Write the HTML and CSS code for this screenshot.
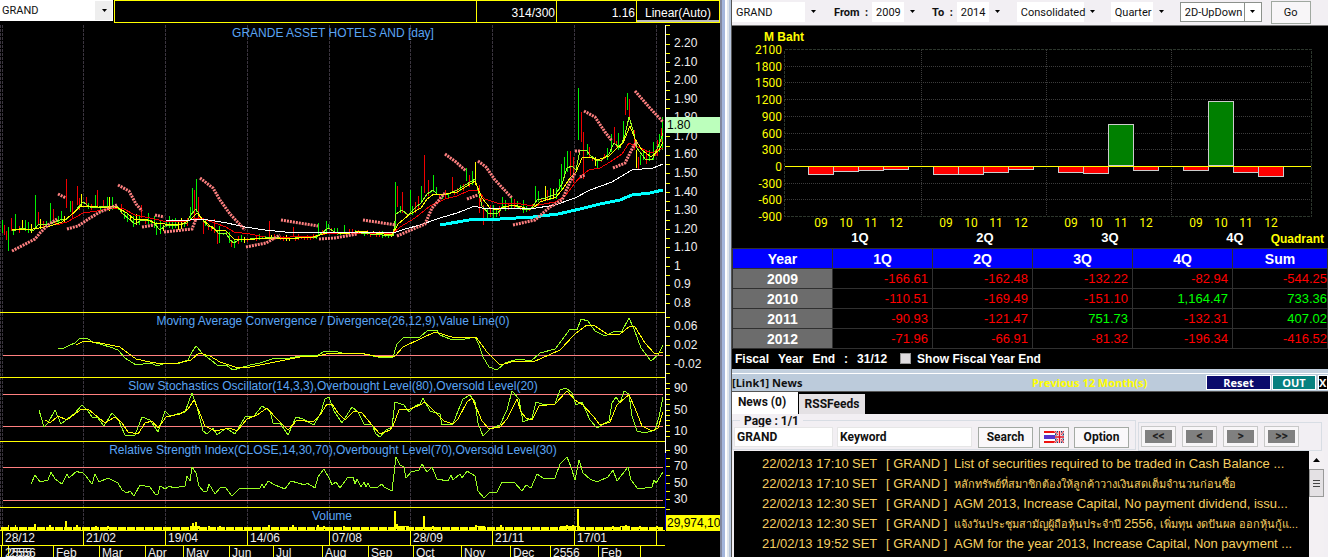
FILE: index.html
```html
<!DOCTYPE html>
<html lang="en">
<head>
<meta charset="utf-8">
<title>GRAND - Technical chart and news</title>
<link rel="stylesheet" href="styles.css">
</head>
<body>
<main class="desk">
  <section class="tech">
    <header class="tech-head">
      <label class="combo combo-symbol"><select aria-label="Symbol"><option>GRAND</option></select><svg class="arrow" viewBox="0 0 7 4"><path d="M1 0h5L3.500 3z"/></svg></label>
      <div class="cells">
        <span class="cell cell-wide"></span>
        <span class="cell">314/300</span>
        <span class="cell">1.16</span>
        <button class="cell cell-btn" type="button">Linear(Auto)</button>
      </div>
    </header>
    <svg class="tech-chart" id="tech" viewBox="0 24 720 533" role="img" aria-label="Price chart">
      <g id="grid"></g>
      <g id="candles"></g>
      <g id="lines"></g>
      <g id="frame"></g>
      <g id="labels"></g>
    </svg>
  </section>

  <div class="splitter"></div>

  <section class="side">
    <section class="fin">
      <form class="bar">
        <label class="combo w-sym"><select aria-label="Company"><option>GRAND</option></select><svg class="arrow" viewBox="0 0 7 4"><path d="M1 0h5L3.500 3z"/></svg></label>
        <label class="lead" for="from">From&nbsp; :</label>
        <span class="combo w-year"><select id="from"><option>2009</option></select><svg class="arrow" viewBox="0 0 7 4"><path d="M1 0h5L3.500 3z"/></svg></span>
        <label class="lead" for="to">To&nbsp; :</label>
        <span class="combo w-year"><select id="to"><option>2014</option></select><svg class="arrow" viewBox="0 0 7 4"><path d="M1 0h5L3.500 3z"/></svg></span>
        <label class="combo w-cons"><select aria-label="Statement"><option>Consolidated</option></select><svg class="arrow" viewBox="0 0 7 4"><path d="M1 0h5L3.500 3z"/></svg></label>
        <label class="combo w-qtr"><select aria-label="Period"><option>Quarter</option></select><svg class="arrow" viewBox="0 0 7 4"><path d="M1 0h5L3.500 3z"/></svg></label>
        <label class="combo w-type boxed"><select aria-label="Chart type"><option>2D-UpDown</option></select><svg class="arrow" viewBox="0 0 7 4"><path d="M1 0h5L3.500 3z"/></svg></label>
        <button class="go" type="button">Go</button>
      </form>
      <svg class="fin-chart" id="fin" viewBox="732 26 596 222" role="img" aria-label="Quarterly profit, million baht"></svg>
      <table class="fin-table">
        <colgroup><col class="c-q"><col class="c-q"><col class="c-q"><col class="c-q"><col class="c-q"><col></colgroup>
        <thead><tr><th>Year</th><th>1Q</th><th>2Q</th><th>3Q</th><th>4Q</th><th>Sum</th></tr></thead>
        <tbody>
          <tr><th>2009</th><td>-166.61</td><td>-162.48</td><td>-132.22</td><td>-82.94</td><td>-544.25</td></tr>
          <tr><th>2010</th><td>-110.51</td><td>-169.49</td><td>-151.10</td><td class="up">1,164.47</td><td class="up">733.36</td></tr>
          <tr><th>2011</th><td>-90.93</td><td>-121.47</td><td class="up">751.73</td><td>-132.31</td><td class="up">407.02</td></tr>
          <tr><th>2012</th><td>-71.96</td><td>-66.91</td><td>-81.32</td><td>-196.34</td><td>-416.52</td></tr>
        </tbody>
      </table>
      <div class="fiscal">
        <p><span>Fiscal</span><span>Year</span><span>End</span><span>:</span><span>31/12</span></p>
        <label><input type="checkbox">Show Fiscal Year End</label>
      </div>
    </section>

    <section class="news">
      <header class="news-title">
        <h2>[Link1] News</h2>
        <span class="period">Previous 12 Month(s)</span>
        <button class="t-btn reset" type="button">Reset</button>
        <button class="t-btn out" type="button">OUT</button>
        <button class="t-btn close" type="button">X</button>
      </header>
      <nav class="tabs">
        <button class="tab tab-on" type="button">News (0)</button>
        <button class="tab" type="button">RSSFeeds</button>
      </nav>
      <form class="search">
        <fieldset class="filter">
          <legend>Page : 1/1</legend>
          <input class="f-sym" aria-label="Symbol" value="GRAND">
          <input class="f-key" aria-label="Keyword" value="Keyword">
          <button class="s-btn s-search" type="button">Search</button>
          <button class="s-btn s-flag" type="button" aria-label="Language">
            <svg viewBox="0 0 20 12" class="flag"><path fill="#fff" d="M0 0h20v12H0z"/><path fill="#e11" d="M0 0h11v2H0zM0 10h11v2H0z"/><path fill="#53c" d="M0 4h11v4H0z"/><path fill="#22406e" d="M11 0h9v12h-9z"/><path stroke="#fff" stroke-width="2" d="M11 0l9 12M20 0l-9 12"/><path stroke="#d12" stroke-width="1" d="M11 0l9 12M20 0l-9 12"/><path stroke="#fff" stroke-width="3" d="M15.500 0v12M11 6h9"/><path stroke="#d12" stroke-width="1.500" d="M15.500 0v12M11 6h9"/></svg>
          </button>
          <button class="s-btn s-opt" type="button">Option</button>
        </fieldset>
        <div class="pager">
          <button type="button"><span>&lt;&lt;</span></button>
          <button type="button"><span>&lt;</span></button>
          <button type="button"><span>&gt;</span></button>
          <button type="button"><span>&gt;&gt;</span></button>
        </div>
      </form>
      <div class="list">
        <ul>
          <li><time>22/02/13 17:10</time><span>SET</span><span>[ GRAND ]</span><a href="#">List of securities required to be traded in Cash Balance ...</a></li>
          <li><time>22/02/13 17:10</time><span>SET</span><span>[ GRAND ]</span><a href="#" class="thai" lang="th">หลักทรัพย์ที่สมาชิกต้องให้ลูกค้าวางเงินสดเต็มจำนวนก่อนซื้อ</a></li>
          <li><time>22/02/13 12:30</time><span>SET</span><span>[ GRAND ]</span><a href="#">AGM 2013, Increase Capital, No payment dividend, issu...</a></li>
          <li><time>22/02/13 12:30</time><span>SET</span><span>[ GRAND ]</span><a href="#" class="thai" lang="th">แจ้งวันประชุมสามัญผู้ถือหุ้นประจำปี <span class="num">2556,</span> เพิ่มทุน งดปันผล ออกหุ้นกู้แ...</a></li>
          <li><time>21/02/13 19:52</time><span>SET</span><span>[ GRAND ]</span><a href="#">AGM for the year 2013, Increase Capital, Non pavyment ...</a></li>
        </ul>
        <div class="scroll">
          <svg class="scroll-up" viewBox="0 0 7 4"><path d="M0 4h7L3.500 0z"/></svg>
          <div class="thumb"><i></i><i></i><i></i></div>
        </div>
      </div>
    </section>
  </section>
</main>
<script src="chart.js"></script>
</body>
</html>
```
FILE: styles.css
```css
* { box-sizing: border-box; }
html, body { margin: 0; height: 100%; }
body {
  background: #000;
  color: #fff;
  font: 12px "Liberation Sans", Arial, sans-serif;
  overflow: hidden;
}
button, input, select { font: inherit; color: inherit; margin: 0; border-radius: 0; }
.desk { display: grid; grid-template-columns: 720fr 12px 596fr; height: 100vh; }
.tech, .side { min-width: 0; overflow: hidden; }

/* combo boxes */
.combo { display: grid; align-items: center; background: #fff; color: #111; height: 20px; }
.combo > * { grid-area: 1 / 1; }
.combo select {
  appearance: none; border: 0; background: none; width: 100%; height: 100%;
  padding: 0 0 0 4px; font: 11px Roboto, "Liberation Sans", sans-serif;
}
.arrow { justify-self: end; width: 7px; height: 4px; margin-right: 5px; fill: #000; pointer-events: none; }

/* technical chart */
.tech-head { display: flex; height: 24px; }
.combo-symbol { width: 113px; height: 21px; margin-right: 1px; padding-right: 0; }
.combo-symbol select { padding-left: 2px; background: linear-gradient(#eee, #eee) right 1px center / 17px 19px no-repeat; }
.cells { flex: 1; display: flex; height: 23px; border: 1px solid #ff0; }
.cell { width: 80px; border: 0; border-left: 1px solid #ff0; text-align: right; line-height: 24px; padding-right: 1px; }
.cell-wide { flex: 1; border-left: 0; }
.cell-btn { background: #000; text-align: center; padding: 0; width: 83px; box-shadow: inset 0 -2px #bbb; }
.tech-chart, .fin-chart { display: block; width: 100%; height: auto; }
.tech-chart { font-size: 12px; }
.t-title { fill: #5aa5f5; text-anchor: middle; }
.t-axis { fill: #eee; }
.t-tag { fill: #000; }

.splitter { background: #b7c6dd; border-left: 2px solid #8288a0; border-right: 1px solid #555; box-shadow: inset 3px 0 #a4b6dc, inset 5px 0 #fff, inset 7px 0 #e0e6ec; }

/* financials */
.side { display: flex; flex-direction: column; background: #c3d0de; }
.fin { background: #000; }
.bar { display: flex; align-items: center; height: 26px; background: #f2eff3; border-bottom: 1px solid #777; color: #111; padding-bottom: 1px; }
.lead { font: bold 11px Roboto, sans-serif; }
.w-sym { width: 90px; margin-right: 12px; }
.w-year { width: 49px; margin: 0 11px 0 4px; }
.w-cons { width: 84px; margin-right: 10px; }
.w-qtr { width: 59px; margin-right: 10px; }
.w-type { width: 82px; margin-right: 9px; }
.bar .combo select { background: linear-gradient(#f2eff3, #f2eff3) right center / 17px 100% no-repeat; }
.boxed { border: 1px solid #8c918c; }
.bar .boxed select { background: linear-gradient(#8c918c, #8c918c) right 16px center / 1px 100% no-repeat; }
.go { width: 40px; height: 23px; border: 1px solid #a0a8a0; background: #f8f6f8; padding: 0; font: 11px Roboto, sans-serif; }
.f-y { fill: #ff0; text-anchor: end; }
.f-x { fill: #ff0; text-anchor: middle; }
.f-x, .f-y { font-family: Roboto, sans-serif; }
.f-q { fill: #fff; text-anchor: middle; font-weight: bold; }
.f-b { fill: #ff0; font-weight: bold; }
.f-end { text-anchor: end; }

.fin-table { width: 100%; border-collapse: collapse; table-layout: fixed; font-size: 13px; }
.c-q { width: 100px; }
.fin-table th, .fin-table td { height: 20px; padding: 0 4px 0 0; border: 1px solid #303030; line-height: 16px; }
.fin-table tr > :last-child { padding-right: 0; }
.fin-table th { font-size: 14px; text-align: center; background: #6c6c6c; padding: 0; }
.fin-table thead th { background: #00f; }
.fin-table td { text-align: right; color: #f00; }
.fin-table td.up { color: #0f0; }
.fiscal { display: flex; gap: 13px; align-items: center; height: 20px; padding: 0 0 1px 3px; font-weight: bold; }
.fiscal p { display: flex; gap: 9px; margin: 0; }
.fiscal label { display: flex; align-items: center; gap: 6px; }
.fiscal input { appearance: none; width: 11px; height: 11px; background: #e0dde0; border: 1px solid #999; }

/* news */
.news { flex: 1; min-height: 0; display: flex; flex-direction: column; margin-top: 4px; border-top: 1px solid #fff; }
.news-title { display: flex; align-items: center; height: 17px; color: #111; background: #bccbdb; font: bold 11px "Open Sans", sans-serif; }
.news-title h2 { margin: 0; font: inherit; width: 300px; }
.period { color: #ff0; flex: 1; }
.t-btn { height: 15px; border: 1px solid #fff; padding: 0; line-height: 13px; color: #fff; flex: none; }
.reset { width: 65px; background: #0b0b6c; margin-right: 1px; }
.out { width: 44px; background: #088080; margin-right: 2px; }
.close { width: 10px; background: #000; text-align: left; overflow: hidden; }
.tabs { display: flex; align-items: flex-end; height: 23px; background: #000; border-top: 1px solid #555; }
.tab { border: 0; padding: 0; height: 20px; width: 66px; background: #e4e1e4; color: #111; font: bold 12px Roboto, sans-serif; }
.tab-on { height: 22px; background: #fff; margin-right: 1px; padding: 0 6px 2px 0; }
.search { display: flex; height: 37px; background: #f2eff3; color: #111; font: bold 12px Roboto, sans-serif; padding-right: 6px; }
.filter { display: flex; align-items: center; border: 1px solid #d8dde4; margin: 0; padding: 0 6px 2px 1px; height: 36px; width: 404px; flex: none; }
.filter legend { margin-left: 6px; padding: 0 4px; line-height: 15px; height: 13px; }
.filter input { height: 20px; border: 1px solid #e6e6e6; background: #fff; padding: 0 2px; }
.f-sym { width: 99px; margin-right: 4px; }
.f-key { width: 135px; margin-right: 6px; }
.s-btn { height: 21px; border: 1px solid #a4aaa4; background: #faf8fa; padding: 0; flex: none; }
.s-search { width: 55px; margin-right: 6px; }
.s-flag { width: 30px; margin-right: 5px; display: grid; place-items: center; }
.s-opt { width: 55px; }
.flag { width: 20px; height: 12px; }
.pager { flex: 1; display: flex; gap: 6px; align-items: center; border: 1px solid #d8dde4; margin: 8px 0 0 2px; padding: 0 2px; }
.pager button { width: 35px; height: 21px; padding: 3px; border: 1px solid #c8c8c8; background: #f8f6f8; display: grid; }
.pager span { background: #808080; color: #222; font: bold 12px/13px Roboto, sans-serif; }
.list { flex: 1; min-height: 0; display: flex; overflow: hidden; background: #000; border: solid #f2eff3; border-width: 0 4px 0 2px; }
.list ul { flex: 1; min-width: 0; list-style: none; margin: 0; padding: 3px 0 0 28px; color: #f5cf62; font-size: 13px; overflow: hidden; }
.list li { display: grid; grid-template-columns: 90px 34px 68px 1fr; height: 20px; line-height: 20px; white-space: nowrap; }
.list a { color: inherit; text-decoration: none; }
.list .thai { font-size: 11px; }
.list .num { font-size: 13px; }
.scroll { width: 15px; background: #f3f0f3; display: flex; flex-direction: column; align-items: center; padding-top: 7px; }
.scroll-up { width: 7px; height: 4px; margin-bottom: 7px; flex: none; }
.thumb { width: 15px; height: 28px; border: 1px solid #999; background: #e4e1e4; display: grid; align-content: center; justify-content: center; gap: 2px; }
.thumb i { width: 7px; height: 1px; background: #444; }
```
FILE: chart.js
```js
const NS = 'http://www.w3.org/2000/svg';
function add(parent, tag, attrs, text) {
  const el = document.createElementNS(NS, tag);
  for (const k in attrs) el.setAttribute(k, attrs[k]);
  if (text !== undefined) el.textContent = text;
  parent.appendChild(el);
  return el;
}
const byId = id => document.getElementById(id);
const G = '#00f000', R = '#f00000', Y = '#ffff00', LIME = '#9f2', PINK = '#ff8080';

/* ---- technical chart ---- */
const series = {
  fast: '12,231 23,228 33,231 38,225 50,224 60,220 67,219 75,211 83,202 90,207 96,208 103,206 112,206 118,207 122,213 129,219 135,224 142,220 152,221 160,230 166,225 178,225 187,223 190,216 196,209 202,219 208,226 213,227 219,234 226,233 230,240 234,243 240,239 250,239 265,238 272,237 280,238 290,239 300,237 315,238 322,233 328,228 335,232 345,233 352,232 370,234 393,236 396,214 402,210 408,215 416,207 421,203 427,194 433,190 438,195 448,194 457,190 467,184 475,179 478,190 482,206 488,213 497,214 502,208 513,205 525,210 531,209 537,200 545,198 556,194 562,184 567,168 572,166 576,170 580,150 586,150 590,155 597,161 602,160 609,154 614,143 620,148 625,135 629,117 633,130 637,148 645,159 652,160 660,142 663,133',
  mid: '12,230 33,229 50,226 62,222 70,216 80,207 90,206 105,208 112,206 118,208 127,213 135,220 145,219 155,223 165,224 180,225 190,220 197,213 203,220 215,230 226,231 234,239 245,240 265,238 285,239 313,237 330,232 345,234 360,231 392,235 398,224 410,214 421,208 427,199 434,194 440,195 457,192 467,186 475,181 482,198 490,208 497,210 503,207 515,205 525,208 532,209 540,202 556,197 562,190 570,178 576,172 582,158 590,157 597,160 609,156 617,148 623,143 630,126 635,139 642,150 651,157 659,150 663,142',
  slow: '56,225 67,222 83,213 97,211 110,209 122,208 135,215 150,218 163,221 185,222 196,218 203,219 215,223 226,227 234,232 250,234 265,237 290,237 315,236 330,233 350,233 392,234 400,227 415,218 430,206 445,199 457,196 470,190 477,190 485,199 500,204 515,203 533,206 555,202 565,196 575,183 582,175 589,170 600,168 610,162 622,154 629,143 640,148 652,153 663,148',
  white: '166,220 190,220 200,219 215,221 227,223 245,227 265,230 285,232 310,232 358,232 393,233 405,229 420,225 440,218 457,213 475,206 485,209 515,208 530,209 555,205 575,198 590,190 612,182 632,170 653,168 663,164',
  cyan: '440,225 475,219 500,219 533,217 558,214 580,209 600,204 620,200 632,195 650,193 663,190',
  macd: '58,348 62,349 70,345 75,343 80,338 88,339 93,342 103,345 110,347 118,350 125,358 136,365 150,363 158,366 165,363 180,363 188,360 192,352 196,346 203,354 211,360 217,365 226,365 233,370 240,368 250,365 260,363 275,358 290,358 300,356 318,355 325,351 335,351 345,354 360,353 378,357 393,357 397,344 403,338 420,337 427,331 437,330 440,335 450,339 465,339 475,337 479,345 483,357 489,367 497,370 505,363 518,359 531,361 540,353 555,349 562,340 570,329 577,330 581,319 588,321 595,331 605,336 613,332 622,331 629,318 634,329 641,348 651,361 658,355 663,345',
  signal: '76,345 84,341 100,343 120,347 136,359 150,362 162,364 178,363 191,360 199,353 210,356 220,362 235,367 250,367 270,363 300,357 318,356 330,353 360,353 375,356 395,356 403,347 420,339 435,332 445,335 455,338 476,337 487,352 500,365 515,361 533,362 560,350 575,334 587,325 595,326 607,334 620,334 630,326 635,327 645,343 655,354 663,352',
  k: '39,410 44,427 48,423 55,410 61,424 75,413 82,405 88,411 92,417 98,418 104,426 112,413 118,419 125,435 135,435 142,417 150,420 158,432 165,411 170,416 185,412 192,393 197,407 203,431 207,434 213,428 217,435 226,428 235,434 245,417 254,416 262,406 270,411 273,423 280,423 288,435 296,417 303,419 314,425 321,412 325,399 329,397 334,411 342,423 352,407 358,412 364,424 372,425 376,434 380,437 386,430 392,427 395,402 404,405 409,412 415,406 420,404 423,398 430,411 440,414 442,425 453,424 458,411 463,399 470,395 475,402 478,423 483,436 490,429 500,425 507,410 512,391 519,399 523,422 532,418 536,402 545,405 555,404 560,390 566,388 572,393 576,405 582,402 590,420 597,428 605,423 609,421 612,403 616,397 620,403 624,391 629,394 632,416 637,431 645,433 655,430 659,417 663,397',
  d: '45,420 50,423 58,416 67,420 80,410 88,409 105,423 115,417 122,423 128,432 138,434 145,423 152,421 158,428 166,417 180,414 188,409 194,400 198,409 205,426 215,431 230,428 237,431 247,419 257,415 267,408 275,417 288,430 297,420 313,422 320,415 327,404 332,404 338,413 345,420 354,411 362,413 372,425 380,434 390,430 393,426 399,410 410,409 420,405 425,402 433,410 444,421 453,424 458,419 467,402 472,398 477,409 482,421 489,429 500,427 507,419 517,399 521,412 526,418 532,420 539,406 555,404 567,391 575,400 583,405 593,416 600,425 610,422 617,405 625,398 629,395 635,408 642,426 652,431 658,428 663,412',
  rsi: '31,484 35,475 40,482 48,480 51,472 55,479 62,484 67,474 69,478 77,471 80,473 82,472 85,475 92,484 95,474 99,482 108,478 118,483 122,490 127,493 130,491 134,496 140,485 150,487 156,495 158,494 160,486 162,487 165,489 170,486 173,488 185,486 187,476 190,481 192,467 196,473 199,486 204,492 207,491 209,484 215,494 221,487 225,487 232,496 240,488 260,488 262,484 264,488 268,481 275,485 285,489 291,481 305,485 307,483 315,488 318,477 324,469 330,480 332,485 336,482 340,488 348,477 353,477 355,484 357,479 361,487 364,482 366,487 368,483 370,487 378,487 382,484 384,487 392,491 396,457 400,465 404,467 406,478 411,472 419,470 422,464 427,472 432,467 437,479 448,481 451,475 453,480 460,474 462,478 467,471 475,476 478,491 484,498 490,492 497,492 502,482 514,482 522,491 526,485 531,488 537,474 543,478 555,478 560,464 567,457 571,467 575,480 579,460 583,473 590,479 597,482 608,477 613,470 617,481 628,467 631,480 638,489 652,487 654,480 656,483 663,472'
};
const sar = ['12,251 35,239 40,233 48,225 57,219', '58,194 66,198', '67,229 78,226 90,218 100,212 117,205', '118,185 129,191 136,204 142,211', '142,227 154,225', '155,215 164,217', '164,232 192,229 196,219', '200,178 213,188 220,200 230,214 245,230', '246,247 266,243 280,235', '281,220 318,226', '319,239 335,238 357,234', '363,220 396,225', '397,236 425,224 432,208 445,193', '445,154 456,162 466,171', '467,199 478,195', '478,161 486,167 495,180 512,198', '513,225 535,220 550,207 562,200 570,182 575,173', '575,151 580,151', '584,111 595,117 605,132 612,141', '580,177 585,175', '613,168 625,163 633,147 637,142', '635,91 649,107 663,122'];
const spikes = [[2,220,233,G],[4,225,235,R],[6,231,240,R],[8,227,251,G],[11,218,231,R],[15,214,230,G],[22,220,230,Y],[35,195,227,G],[38,212,225,R],[50,203,222,G],[53,209,222,R],[66,179,208,R],[70,201,212,G],[72,201,218,R],[77,186,205,R],[81,194,206,Y],[86,197,206,R],[95,195,207,G],[97,190,208,R],[107,197,208,G],[141,205,218,R],[156,222,235,G],[192,188,214,G],[194,190,222,R],[196,179,212,G],[198,197,218,R],[203,218,234,R],[217,232,244,R],[219,226,243,G],[231,240,247,R],[234,240,248,G],[269,221,237,R],[293,227,237,R],[318,223,235,G],[326,221,232,G],[344,225,232,G],[395,182,229,G],[397,186,207,R],[402,192,213,R],[410,190,211,G],[421,186,202,G],[424,155,193,R],[428,180,196,R],[433,175,192,G],[452,177,193,R],[466,168,181,G],[475,162,185,Y],[479,185,213,R],[483,205,225,R],[487,208,221,G],[502,197,208,G],[535,186,203,G],[545,186,200,Y],[561,164,190,G],[564,157,175,G],[567,151,172,G],[570,151,176,R],[573,157,183,R],[578,88,140,G],[581,112,142,R],[583,132,179,R],[587,144,155,G],[595,157,166,Y],[597,160,168,G],[611,134,152,G],[614,127,143,R],[618,133,150,G],[623,121,139,G],[625,97,115,R],[627,93,110,G],[629,99,118,R],[634,130,150,R],[636,150,168,Y],[638,157,169,R],[640,155,165,G],[653,142,160,G],[657,140,156,R],[659,134,152,G],[661,128,142,R],[662,117,150,G]];

const grid = byId('grid'), candles = byId('candles'), lines = byId('lines'), frame = byId('frame'), labels = byId('labels');
const path = (p, d, stroke, extra) => add(p, 'path', Object.assign({ d, stroke, fill: 'none', 'shape-rendering': 'crispEdges' }, extra));
const line = (pts, stroke, extra) => add(lines, 'polyline', Object.assign({ points: pts, stroke, fill: 'none', 'shape-rendering': 'crispEdges' }, extra));

const gx = [0, 2, 83, 165, 247, 329, 410, 492, 574, 656];
path(grid, gx.map(x => `M${x}.5 25V530`).join(''), '#3a343e', { 'stroke-dasharray': '3 1' });

const fastPts = series.fast.split(' ').map(p => p.split(',').map(Number));
function fastAt(x) {
  for (let i = 1; i < fastPts.length; i++) {
    const [x0, y0] = fastPts[i - 1], [x1, y1] = fastPts[i];
    if (x <= x1) return y0 + (y1 - y0) * Math.max(0, x - x0) / (x1 - x0);
  }
  return fastPts[fastPts.length - 1][1];
}
let seed = 7;
const rnd = () => (seed = (seed * 16807) % 2147483647) / 2147483647;
const bars = { [G]: '', [R]: '', [Y]: '' };
for (let x = 13; x < 660; x += 3) {
  const calm = x > 245 && x < 393;
  const up = rnd() * (calm ? 4 : 10), down = rnd() * (calm ? 2 : 4), c = rnd(), y = fastAt(x);
  if (spikes.some(s => Math.abs(s[0] - x) < 2)) continue;
  bars[c < 0.42 ? G : c < 0.88 ? R : Y] += `M${x}.5 ${Math.round(y - up)}V${Math.round(y + down + 1)}`;
}
spikes.forEach(([x, t, b, c]) => { bars[c] += `M${x}.5 ${t}V${b}`; });
for (const c in bars) path(candles, bars[c], c);

path(lines, 'M3 355.5H663M3 394.5H663M3 426.5H663M3 467.5H663M3 500.5H663', PINK);
line(series.cyan, '#0ff', { 'stroke-width': 3 });
line(series.slow, R);
line(series.fast, LIME);
line(series.mid, Y);
line(series.white, '#fff');
sar.forEach(s => line(s, PINK, { 'stroke-width': 3, 'stroke-dasharray': '2 1', 'shape-rendering': 'auto' }));
line(series.macd, LIME); line(series.signal, Y);
line(series.k, LIME); line(series.d, Y);
line(series.rsi, LIME);

/* volume */
path(lines, 'M1 528.5H663', Y, { 'stroke-width': 3, 'stroke-dasharray': '8 1' });
path(lines, 'M8 526h1M15 526h1M35 524v5M50 525v5M66 521v8M77 525v4M96 526v3M108 526v3M193 523v6M196 522v7M198 526v3M209 526v3M220 526v3M269 525v4M293 525v4M318 525v4M324 526v3M344 526v3M395 511v18M397 524v5M404 526v3M424 516v13M433 526v3M476 525v4M501 525v4M562 526v3M567 525v4M573 525v4M578 509v20M613 526v3M626 525v4M640 526v3M657 526v3', Y, { 'stroke-width': 2 });
path(lines, 'M190 526.5h10M395 526.5h14M475 526.5h10M560 526.5h20M620 526.5h10', Y);

/* panel borders and date rows */
path(frame, 'M0 312.5H665M0 377.5H665M0 441.5H665M0 507.5H665M0 530.5H665M0 545.5H665', Y);
path(frame, gx.slice(1).map(x => `M${x}.5 530V545`).join(''), Y);
path(frame, [1, 8, 53, 99, 145, 183, 229, 273, 322, 368, 413, 461, 510, 550, 598, 640].map(x => `M${x}.5 545V557`).join(''), Y);
path(frame, 'M665.5 25V453', '#fff');
path(frame, 'M665.5 453V530', '#00c');
let ticks = '';
for (let i = 0; i < 31; i++) ticks += `M666 ${Math.round(25 + i * 9.27)}.5h4`;
for (let i = 0; i < 7; i++) ticks += `M666 ${Math.round(317 + i * 9.4)}.5h4`;
for (let i = 0; i < 11; i++) ticks += `M666 ${Math.round(383 + i * 5.3)}.5h4`;
for (let i = 0; i < 7; i++) ticks += `M666 ${Math.round(450 + i * 8.2)}.5h4`;
ticks += 'M666 509.5h4';
path(frame, ticks, Y);

/* texts */
const text = (x, y, cls, s) => add(labels, 'text', { x, y, class: cls }, s);
['2.20', '2.10', '2.00', '1.90', '1.80', '1.70', '1.60', '1.50', '1.40', '1.30', '1.20', '1.10', '1', '0.9', '0.8']
  .forEach((s, i) => text(674, Math.round(47 + i * 18.57), 't-axis', s));
[['0.06', 330], ['0.02', 349], ['-0.02', 368], ['90', 392], ['50', 414], ['10', 435], ['90', 454], ['70', 470], ['50', 487], ['30', 503]]
  .forEach(([s, y]) => text(674, y, 't-axis', s));
text(333, 37, 't-title', 'GRANDE ASSET HOTELS AND [day]');
text(333, 325, 't-title', 'Moving Average Convergence / Divergence(26,12,9),Value Line(0)');
text(333, 390, 't-title', 'Slow Stochastics Oscillator(14,3,3),Overbought Level(80),Oversold Level(20)');
text(333, 454, 't-title', 'Relative Strength Index(CLOSE,14,30,70),Overbought Level(70),Oversold Level(30)');
text(332, 520, 't-title', 'Volume');
['28/12', '21/02', '19/04', '14/06', '07/08', '28/09', '21/11', '17/01'].forEach((s, i) => text(gx[i + 1] + 3, 542, 't-axis', s));
[[5, '2555'], [9, '2556'], [56, 'Feb'], [102, 'Mar'], [148, 'Apr'], [186, 'May'], [232, 'Jun'], [276, 'Jul'], [325, 'Aug'], [371, 'Sep'], [416, 'Oct'], [464, 'Nov'], [513, 'Dec'], [553, '2556'], [601, 'Feb']]
  .forEach(([x, s]) => text(x, 557, 't-axis', s));
add(labels, 'rect', { x: 666, y: 117, width: 54, height: 16, fill: '#bcffbc' });
text(667, 129, 't-tag', '1.80');
add(labels, 'rect', { x: 666, y: 515, width: 54, height: 16, fill: '#ff0' });
text(667, 527, 't-tag', '29,974,10');

/* ---- quarterly results ---- */
const fin = byId('fin');
const t = (x, y, cls, s, size = 12) => add(fin, 'text', { x, y, class: cls, 'font-size': size }, s);
let rows = '';
for (let i = 0; i <= 10; i++) {
  const y = Math.round(49 + i * 16.7);
  if (i % 10) rows += `M785 ${y}.5H1311`;
  t(782, y + 5, 'f-y', String(2100 - i * 300));
}
path(fin, rows + 'M921.5 50V216M1046.5 50V216M1171.5 50V216', '#3c3c3c', { 'stroke-dasharray': '1 1' });
path(fin, 'M784.5 49.5H1311.5V216.5H784.5z', '#2c362c', { 'stroke-dasharray': '3 1' });
const data = [[-166.61, -110.51, -90.93, -71.96], [-162.48, -169.49, -121.47, -66.91], [-132.22, -151.1, 751.73, -81.32], [-82.94, 1164.47, -132.31, -196.34]];
data.forEach((q, i) => {
  q.forEach((v, j) => {
    const x = 808.5 + i * 125 + j * 25, h = Math.max(3, Math.round(Math.abs(v) * 0.056 - 1));
    add(fin, 'rect', { x, y: v > 0 ? 165.5 - h : 166.5, width: 25, height: h, fill: v > 0 ? '#008000' : '#f00', stroke: '#ccc' });
    t(821 + i * 125 + j * 25, 227, 'f-x', ['09', '10', '11', '12'][j]);
  });
  t(860 + i * 125, 242, 'f-q', `${i + 1}Q`, 13);
});
path(fin, 'M785 166.5H1311', Y);
t(764, 41, 'f-b', 'M Baht');
t(1324, 243, 'f-b f-end', 'Quadrant');
```
